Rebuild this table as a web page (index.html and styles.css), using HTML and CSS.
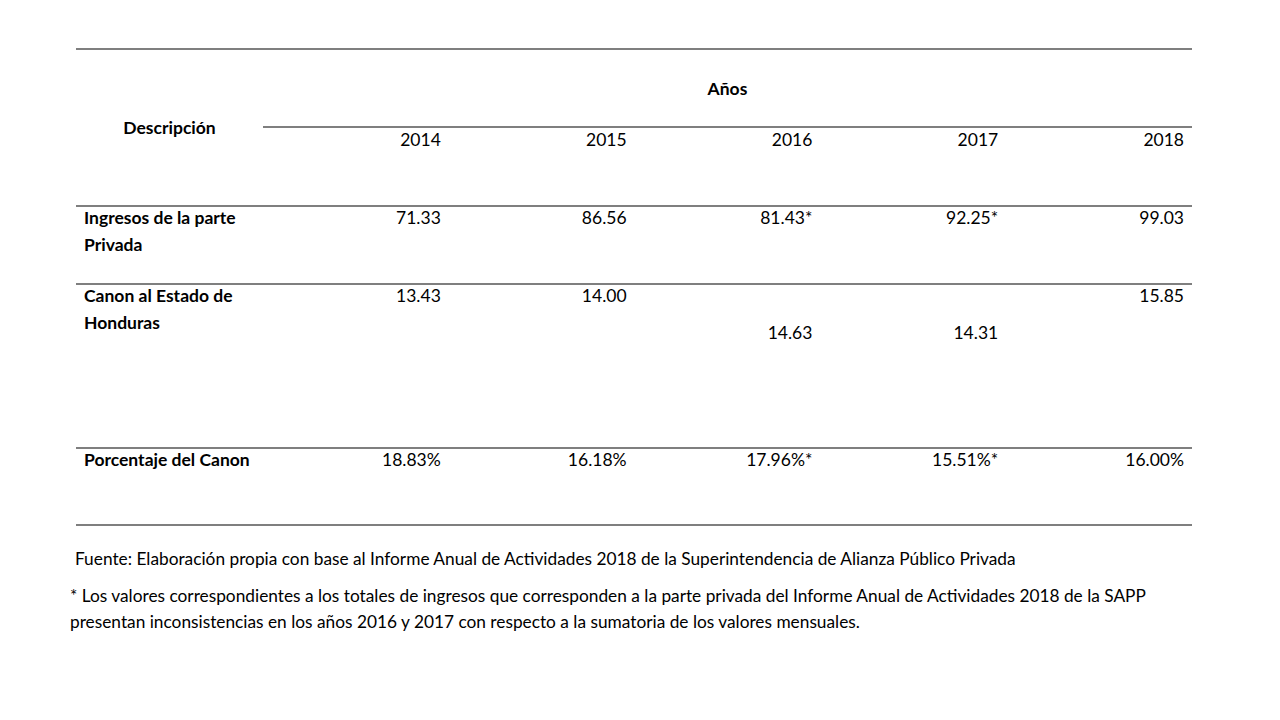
FILE: index.html
```html
<!DOCTYPE html>
<html lang="es">
<head>
<meta charset="utf-8">
<title>Tabla Canon</title>
<link rel="stylesheet" href="styles.css">
</head>
<body>
<div class="page">
  <div class="table">
    <div class="head">
      <div class="desc">Descripción</div>
      <div class="years-block">
        <div class="anos">Años</div>
        <div class="years">
          <div class="num">2014</div>
          <div class="num">2015</div>
          <div class="num">2016</div>
          <div class="num">2017</div>
          <div class="num">2018</div>
        </div>
      </div>
    </div>
    <div class="row row-1">
      <div class="label">Ingresos de la parte<br>Privada</div>
      <div class="num">71.33</div>
      <div class="num">86.56</div>
      <div class="num">81.43*</div>
      <div class="num">92.25*</div>
      <div class="num">99.03</div>
    </div>
    <div class="row row-2">
      <div class="label">Canon al Estado de<br>Honduras</div>
      <div class="num">13.43</div>
      <div class="num">14.00</div>
      <div class="num low">14.63</div>
      <div class="num low">14.31</div>
      <div class="num">15.85</div>
    </div>
    <div class="row row-3">
      <div class="label">Porcentaje del Canon</div>
      <div class="num">18.83%</div>
      <div class="num">16.18%</div>
      <div class="num">17.96%*</div>
      <div class="num">15.51%*</div>
      <div class="num">16.00%</div>
    </div>
  </div>
  <p class="source">Fuente: Elaboración propia con base al Informe Anual de Actividades 2018 de la Superintendencia de Alianza Público Privada</p>
  <p class="note">* Los valores correspondientes a los totales de ingresos que corresponden a la parte privada del Informe Anual de Actividades 2018 de la SAPP<br>presentan inconsistencias en los años 2016 y 2017 con respecto a la sumatoria de los valores mensuales.</p>
</div>
</body>
</html>
```

FILE: styles.css
```css
html, body {
  margin: 0;
  padding: 0;
  background: #ffffff;
}

body {
  font-family: "Lato", "Open Sans", "Liberation Sans", sans-serif;
  color: #000000;
  font-size: 17.5px;
}

.page {
  width: 1280px;
  height: 720px;
  padding-top: 48px;
  box-sizing: border-box;
}

.table {
  margin-left: 76px;
  width: 1116px;
  border-top: 2px solid #7f7f7f;
  border-bottom: 2px solid #7f7f7f;
}

.head {
  display: grid;
  grid-template-columns: 187px 1fr;
  height: 155px;
}

.desc {
  font-weight: bold;
  display: flex;
  align-items: center;
  justify-content: center;
}

.years-block {
  display: flex;
  flex-direction: column;
}

.anos {
  height: 76px;
  display: flex;
  align-items: center;
  justify-content: center;
  font-weight: bold;
  border-bottom: 2px solid #7f7f7f;
}

.years {
  display: grid;
  grid-template-columns: repeat(5, 1fr);
  line-height: 27px;
  margin-top: -2px;
}

.num {
  text-align: right;
  padding-right: 8px;
}

.row {
  display: grid;
  grid-template-columns: 187px repeat(5, 1fr);
  border-top: 2px solid #7f7f7f;
  line-height: 27px;
  box-sizing: border-box;
}

.row > div {
  margin-top: -3px;
}

.label {
  font-weight: bold;
  padding-left: 8px;
}

.row-1 { height: 78px; }
.row-2 { height: 164px; }
.row-3 { height: 77px; }

.low {
  padding-top: 37px;
}

.source {
  margin: 20px 0 0 75px;
  line-height: 26px;
  font-size: 17.3px;
}

.note {
  margin: 11px 0 0 70px;
  line-height: 26px;
  font-size: 17.3px;
}
```
